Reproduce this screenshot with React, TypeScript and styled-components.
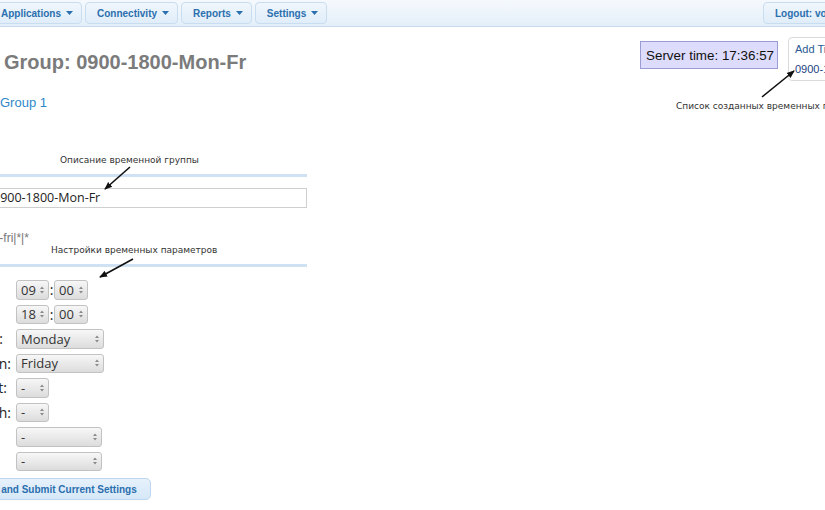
import React from "react";
import styled, { createGlobalStyle } from "styled-components";

const GlobalStyle = createGlobalStyle`
  html, body {
    margin: 0;
    padding: 0;
    background: #fff;
    overflow: hidden;
  }
  body {
    font-family: "Liberation Sans", Arial, sans-serif;
  }
`;

const Page = styled.div`
  position: relative;
  width: 825px;
  height: 510px;
  overflow: hidden;
`;

const MenuBar = styled.nav`
  display: flex;
  align-items: center;
  gap: 3px;
  height: 26px;
  margin-left: -11px;
  background: linear-gradient(#f5f9fd, #e4eff9);
  border-bottom: 1px solid #c8dbee;
`;

const MenuButton = styled.div<{ $push?: boolean; $pullRight?: number }>`
  display: flex;
  align-items: center;
  gap: 5px;
  flex-shrink: 0;
  box-sizing: border-box;
  height: 22px;
  padding: 0 8px 0 11px;
  border: 1px solid #c9ddf0;
  border-radius: 4px;
  background: linear-gradient(#f0f6fc, #e0edf9);
  color: #2b6fae;
  font-size: 10px;
  font-weight: bold;
  white-space: nowrap;
  margin-left: ${(p) => (p.$push ? "auto" : "0")};
  margin-right: ${(p) => (p.$pullRight ? `-${p.$pullRight}px` : "0")};
`;

const Caret = () => (
  <svg width="7" height="4" viewBox="0 0 7 4">
    <path d="M0 0 L7 0 L3.5 4 Z" fill="#2b6fae" />
  </svg>
);

const Content = styled.div`
  display: flex;
  align-items: flex-start;
`;

const LeftCol = styled.div`
  flex: none;
  width: 308px;
`;

const Heading = styled.h1`
  margin: 23px 0 0 4px;
  font-size: 20px;
  line-height: 24px;
  font-weight: bold;
  color: #7b7b7b;
  white-space: nowrap;
`;

const GroupLink = styled.a`
  display: block;
  margin-top: 21px;
  font-size: 13px;
  line-height: 16px;
  color: #3088c9;
  text-decoration: none;
`;

const Rule = styled.div<{ $top: number }>`
  margin: ${(p) => p.$top}px 0 0 -20px;
  width: 327px;
  border-top: 3px solid #cfe1f3;
`;

const NameInput = styled.div`
  box-sizing: border-box;
  margin: 11px 0 0 -14px;
  width: 321px;
  height: 20px;
  padding-left: 6px;
  border: 1px solid #cfcfcf;
  font-family: "Open Sans", sans-serif;
  font-size: 12.5px;
  line-height: 18px;
  color: #222;
  white-space: nowrap;
`;

const Pattern = styled.div`
  margin: 23px 0 0 -24px;
  font-size: 12px;
  line-height: 14px;
  color: #777;
  white-space: nowrap;
`;

const FormGrid = styled.div`
  display: grid;
  grid-template-columns: 200px auto;
  grid-auto-rows: 19.5px;
  row-gap: 5px;
  align-items: center;
  margin: 13px 0 0 -184px;
`;

const Label = styled.div<{ $tail: number }>`
  text-align: right;
  padding-right: ${(p) => p.$tail}px;
  font-family: "Open Sans", sans-serif;
  font-size: 14px;
  color: #222;
  white-space: nowrap;
`;

const Controls = styled.div`
  display: flex;
  align-items: center;
`;

const SelectBox = styled.div<{ $w: number }>`
  display: flex;
  align-items: center;
  justify-content: space-between;
  box-sizing: border-box;
  width: ${(p) => p.$w}px;
  height: 19.5px;
  padding: 0 4px 0 4px;
  border: 1px solid #c2c2c2;
  border-radius: 3px;
  background: linear-gradient(#f7f7f7, #dcdcdc);
  font-family: "Open Sans", sans-serif;
  font-size: 13px;
  color: #333;
`;

const Colon = styled.span`
  width: 5px;
  text-align: center;
  font-family: "Open Sans", sans-serif;
  font-size: 14px;
  color: #222;
`;

const Spinner = () => (
  <svg width="4" height="8" viewBox="0 0 4 8">
    <path d="M0 3 L2 0.5 L4 3 Z M0 5 L2 7.5 L4 5 Z" fill="#8a8a8a" />
  </svg>
);

const Select = ({ w, value }: { w: number; value: string }) => (
  <SelectBox $w={w}>
    <span>{value}</span>
    <Spinner />
  </SelectBox>
);

const SubmitButton = styled.div`
  display: inline-flex;
  align-items: center;
  box-sizing: border-box;
  height: 22px;
  margin: 7px 0 0 -38px;
  padding: 0 13px 0 12px;
  border: 1px solid #bcd7ef;
  border-radius: 5px;
  background: linear-gradient(#e6f1fb, #d6e8f8);
  color: #2b6fae;
  font-size: 10px;
  font-weight: bold;
  white-space: nowrap;
`;

const Aside = styled.div`
  flex: none;
  display: flex;
  align-items: flex-start;
  gap: 10px;
  margin-left: auto;
  margin-right: -90px;
`;

const ServerTime = styled.div`
  box-sizing: border-box;
  display: flex;
  align-items: center;
  width: 138px;
  height: 28px;
  margin-top: 14px;
  padding-left: 5px;
  background: #dddcfd;
  border: 1px solid #9c9cd4;
  font-size: 13.4px;
  color: #111;
  white-space: nowrap;
`;

const ListPanel = styled.div`
  box-sizing: border-box;
  width: 127px;
  height: 44px;
  margin-top: 10px;
  padding: 1px 6px;
  border: 1px solid #dadada;
  border-radius: 4px;
  font-size: 11px;
  line-height: 20px;
  white-space: nowrap;
`;

const PanelLink = styled.div<{ $tone: string }>`
  color: ${(p) => p.$tone};
`;

const Overlay = styled.svg`
  position: absolute;
  left: 0;
  top: 0;
  pointer-events: none;
`;

const Note = styled.div<{ $x: number; $y: number }>`
  position: absolute;
  left: ${(p) => p.$x}px;
  top: ${(p) => p.$y}px;
  font-family: "DejaVu Sans", sans-serif;
  font-size: 9px;
  line-height: 12px;
  color: #333;
  white-space: nowrap;
`;

const arrows = [
  { x1: 762, y1: 97, x2: 794, y2: 71 },
  { x1: 130, y1: 167, x2: 105, y2: 189 },
  { x1: 133, y1: 259, x2: 100, y2: 277 },
];

const rows = [
  { label: "Start time:", tail: 18, kind: "time", a: "09", b: "00" },
  { label: "End time:", tail: 18, kind: "time", a: "18", b: "00" },
  { label: "Weekday from:", tail: 13, kind: "select", w: 88, a: "Monday" },
  { label: "Weekday end on:", tail: 5, kind: "select", w: 88, a: "Friday" },
  { label: "Month day start:", tail: 9, kind: "select", w: 33, a: "-" },
  { label: "Month day finish:", tail: 5, kind: "select", w: 33, a: "-" },
  { label: "Month start:", tail: 18, kind: "select", w: 86, a: "-" },
  { label: "Month end:", tail: 18, kind: "select", w: 86, a: "-" },
];

export default function App() {
  return (
    <Page>
      <GlobalStyle />
      <MenuBar>
        {["Applications", "Connectivity", "Reports", "Settings"].map((m) => (
          <MenuButton key={m}>
            {m}
            <Caret />
          </MenuButton>
        ))}
        <MenuButton $push $pullRight={49}>Logout: voipadmin</MenuButton>
      </MenuBar>

      <Content>
        <LeftCol>
          <Heading>Group: 0900-1800-Mon-Fr</Heading>
          <GroupLink>Group 1</GroupLink>
          <Rule $top={63} />
          <NameInput>0900-1800-Mon-Fr</NameInput>
          <Pattern>mon-fri|*|*</Pattern>
          <Rule $top={19} />
          <FormGrid>
            {rows.map((r) => (
              <React.Fragment key={r.label}>
                <Label $tail={r.tail}>{r.label}</Label>
                <Controls>
                  {r.kind === "time" ? (
                    <>
                      <Select w={33} value={r.a} />
                      <Colon>:</Colon>
                      <Select w={34} value={r.b!} />
                    </>
                  ) : (
                    <Select w={r.w!} value={r.a} />
                  )}
                </Controls>
              </React.Fragment>
            ))}
          </FormGrid>
          <SubmitButton>Save and Submit Current Settings</SubmitButton>
        </LeftCol>

        <Aside>
          <ServerTime>Server time: 17:36:57</ServerTime>
          <ListPanel>
            <PanelLink $tone="#2a5b92">Add Time Group</PanelLink>
            <PanelLink $tone="#1c3f82">0900-1800-Mon-Fri</PanelLink>
          </ListPanel>
        </Aside>
      </Content>

      <Overlay width="825" height="510" viewBox="0 0 825 510">
        <defs>
          <marker id="head" markerWidth="8" markerHeight="8" refX="7" refY="4" orient="auto" markerUnits="userSpaceOnUse">
            <path d="M0 0.8 L8 4 L0 7.2 Z" fill="#111" />
          </marker>
        </defs>
        {arrows.map((a, i) => (
          <line key={i} x1={a.x1} y1={a.y1} x2={a.x2} y2={a.y2} stroke="#111" strokeWidth="1.6" markerEnd="url(#head)" />
        ))}
      </Overlay>
      <Note $x={676} $y={100}>Список созданных временных параметров</Note>
      <Note $x={60} $y={154}>Описание временной группы</Note>
      <Note $x={51} $y={244}>Настройки временных параметров</Note>
    </Page>
  );
}
